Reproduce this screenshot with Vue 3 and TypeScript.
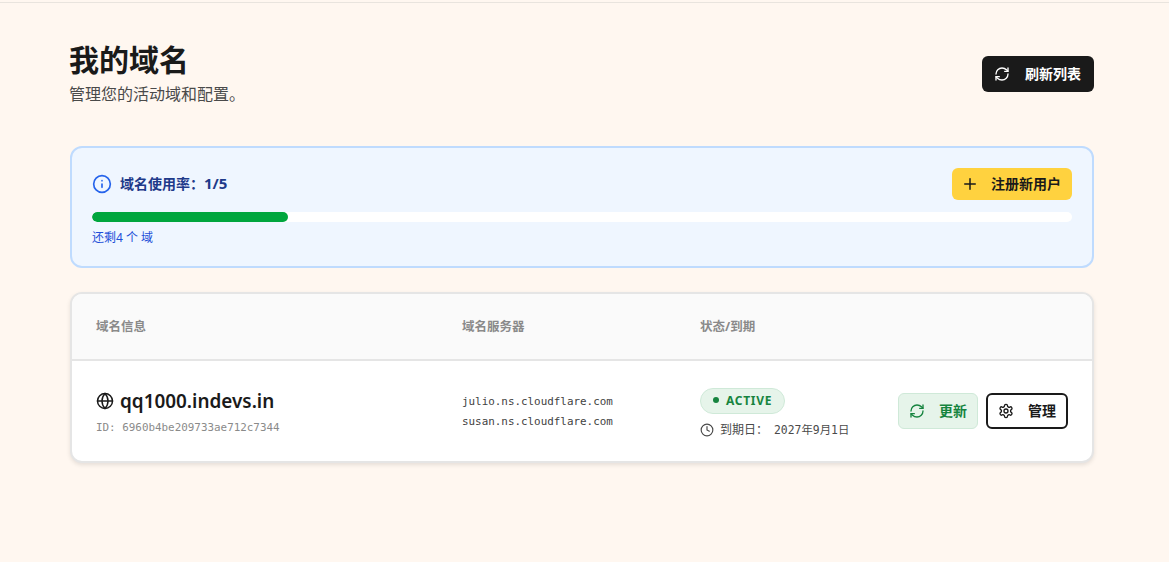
<script setup lang="ts">
const refreshPaths = [
  'M3 12a9 9 0 0 1 9-9 9.75 9.75 0 0 1 6.74 2.74L21 8',
  'M21 3v5h-5',
  'M21 12a9 9 0 0 1-9 9 9.75 9.75 0 0 1-6.74-2.74L3 16',
  'M8 16H3v5',
]
const nameservers: string[] = ['julio.ns.cloudflare.com', 'susan.ns.cloudflare.com']
const usedPercent = 20
</script>

<template>
  <div class="page">
    <div class="rule"></div>
    <main class="wrap">
      <header class="head">
        <div>
          <h1 class="title">我的域名</h1>
          <p class="sub">管理您的活动域和配置。</p>
        </div>
        <button class="btn btn-dark">
          <svg class="ico" viewBox="0 0 24 24"><path v-for="d in refreshPaths" :key="d" :d="d" /></svg>
          <span>刷新列表</span>
        </button>
      </header>

      <section class="usage">
        <div class="usage-top">
          <div class="usage-label">
            <svg class="ico info" viewBox="0 0 24 24"><circle cx="12" cy="12" r="10" /><path d="M12 16v-4" /><path d="M12 8h.01" /></svg>
            <span class="usage-text">域名使用率：<span class="frac">1/5</span></span>
          </div>
          <button class="btn btn-yellow">
            <svg class="ico plus" viewBox="0 0 24 24"><path d="M5 12h14" /><path d="M12 5v14" /></svg>
            <span>注册新用户</span>
          </button>
        </div>
        <div class="track"><div class="fill" :style="{ width: usedPercent + '%' }"></div></div>
        <p class="left">还剩4 个 域</p>
      </section>

      <section class="table">
        <div class="row thead">
          <div>域名信息</div>
          <div>域名服务器</div>
          <div>状态/到期</div>
        </div>
        <div class="row tbody">
          <div class="info-cell">
            <div class="domain">
              <svg class="ico globe" viewBox="0 0 24 24"><circle cx="12" cy="12" r="10" /><path d="M12 2a14.5 14.5 0 0 0 0 20 14.5 14.5 0 0 0 0-20" /><path d="M2 12h20" /></svg>
              <span>qq1000.indevs.in</span>
            </div>
            <div class="id">ID: 6960b4be209733ae712c7344</div>
          </div>
          <div class="ns">
            <div v-for="n in nameservers" :key="n">{{ n }}</div>
          </div>
          <div class="status">
            <span class="badge"><i class="dot"></i>ACTIVE</span>
            <div class="expiry">
              <svg class="ico clock" viewBox="0 0 24 24"><circle cx="12" cy="12" r="10" /><path d="M12 6v6l4 2" /></svg>
              <span class="exp-label">到期日：</span>
              <span class="exp-date">2027年9月1日</span>
            </div>
          </div>
          <div class="actions">
            <button class="btn btn-green">
              <svg class="ico" viewBox="0 0 24 24"><path v-for="d in refreshPaths" :key="d" :d="d" /></svg>
              <span>更新</span>
            </button>
            <button class="btn btn-outline">
              <svg class="ico" viewBox="0 0 24 24"><path d="M12.22 2h-.44a2 2 0 0 0-2 2v.18a2 2 0 0 1-1 1.73l-.43.25a2 2 0 0 1-2 0l-.15-.08a2 2 0 0 0-2.73.73l-.22.38a2 2 0 0 0 .73 2.73l.15.1a2 2 0 0 1 1 1.72v.51a2 2 0 0 1-1 1.74l-.15.09a2 2 0 0 0-.73 2.73l.22.38a2 2 0 0 0 2.73.73l.15-.08a2 2 0 0 1 2 0l.43.25a2 2 0 0 1 1 1.73V20a2 2 0 0 0 2 2h.44a2 2 0 0 0 2-2v-.18a2 2 0 0 1 1-1.73l.43-.25a2 2 0 0 1 2 0l.15.08a2 2 0 0 0 2.73-.73l.22-.39a2 2 0 0 0-.73-2.73l-.15-.08a2 2 0 0 1-1-1.74v-.5a2 2 0 0 1 1-1.74l.15-.09a2 2 0 0 0 .73-2.73l-.22-.38a2 2 0 0 0-2.73-.73l-.15.08a2 2 0 0 1-2 0l-.43-.25a2 2 0 0 1-1-1.73V4a2 2 0 0 0-2-2z" /><circle cx="12" cy="12" r="3" /></svg>
              <span>管理</span>
            </button>
          </div>
        </div>
      </section>
    </main>
  </div>
</template>

<style>
html, body { margin: 0; background: #fff7f0; }
</style>

<style scoped>
.page {
  min-height: 562px;
  box-sizing: border-box;
  background: #fff7f0;
  padding-top: 2px;
  font-family: "Noto Sans", "Noto Sans CJK SC", sans-serif;
  color: #1a1a1a;
}
.rule { height: 1px; background: #e9e4de; }
.wrap { width: 1024px; margin-left: 70px; padding-top: 39px; }
.head { display: flex; justify-content: space-between; align-items: center; margin-bottom: 40px; }
.title { margin: 0 0 4px -1px; font-size: 30px; line-height: 36px; font-weight: 700; }
.sub { margin: 0 0 0 -1px; font-size: 16px; line-height: 24px; color: #4a4a4a; }
.btn {
  display: inline-flex;
  align-items: center;
  box-sizing: border-box;
  border: 0;
  border-radius: 6px;
  font-family: inherit;
  font-size: 14px;
  font-weight: 700;
  padding: 0;
}
.btn span { margin-top: -2px; }
.ico { width: 16px; height: 16px; fill: none; stroke: currentColor; stroke-width: 2; stroke-linecap: round; stroke-linejoin: round; flex: none; }
.btn-dark { background: #1a1a1a; color: #fff; height: 36px; width: 112px; padding-left: 12px; gap: 15px; }
.btn-yellow { background: #ffd23f; color: #1a1a1a; height: 32px; width: 120px; padding-left: 9px; gap: 12px; }
.plus { width: 18px; height: 18px; }
.usage {
  box-sizing: border-box;
  height: 122px;
  background: #eff6ff;
  border: 2px solid #bfdbfe;
  border-radius: 12px;
  padding: 20px;
}
.usage-top { display: flex; justify-content: space-between; align-items: center; margin-bottom: 12px; }
.usage-label { display: flex; align-items: center; gap: 8px; font-size: 14px; font-weight: 700; color: #1e3a8a; }
.usage-text { margin-top: -2px; }
.frac { font-size: 15px; }
.info { width: 20px; height: 20px; color: #2563eb; }
.track { height: 10px; background: #fff; border-radius: 5px; overflow: hidden; }
.fill { height: 100%; background: #00a63e; border-radius: 5px; }
.left { margin: 8px 0 0; font-size: 12px; line-height: 16px; color: #1d4ed8; }
.table {
  margin-top: 24px;
  border: 2px solid #e5e5e5;
  border-radius: 12px;
  overflow: hidden;
  background: #fff;
  box-shadow: 0 2px 4px rgba(0, 0, 0, 0.1);
}
.row { display: grid; grid-template-columns: 366px 238px 198px 1fr; align-items: center; }
.row > div { box-sizing: border-box; padding-left: 24px; }
.thead { height: 63px; padding-bottom: 2px; background: #fafafa; border-bottom: 2px solid #e5e5e5; font-size: 12.5px; font-weight: 700; color: #8a8a8a; }
.tbody { height: 100px; }
.info-cell, .ns { padding-top: 2px; }
.domain { display: flex; align-items: center; gap: 6px; font-size: 18.9px; line-height: 26px; font-weight: 600; color: #1a1a1a; }
.globe { width: 18px; height: 18px; }
.id { margin-top: 6px; font-family: "DejaVu Sans Mono", monospace; font-size: 10.9px; line-height: 16px; color: #8a8a8a; }
.ns { font-family: "DejaVu Sans Mono", monospace; font-size: 10.9px; line-height: 20px; color: #3f3f3f; }
.badge {
  display: inline-flex;
  align-items: center;
  gap: 7px;
  box-sizing: border-box;
  height: 26px;
  padding: 0 12px 2px;
  background: #e6f4ea;
  border: 1px solid #cfe9d8;
  border-radius: 13px;
  font-size: 12px;
  font-weight: 700;
  letter-spacing: 0.7px;
  color: #16843f;
}
.dot { width: 6px; height: 6px; border-radius: 50%; background: #16843f; }
.expiry { display: flex; align-items: center; margin-top: 8px; margin-bottom: -2px; font-size: 12px; line-height: 16px; color: #4a4a4a; }
.clock { width: 14px; height: 14px; margin-right: 6px; }
.exp-label { margin-right: 6px; }
.exp-date { font-family: "DejaVu Sans Mono", "Noto Sans CJK SC", monospace; font-size: 11.4px; }
.actions { display: flex; justify-content: flex-end; gap: 8px; padding-right: 24px; padding-left: 0 !important; }
.btn-green { background: #e6f4ea; border: 1px solid #cfe9d8; color: #16843f; height: 36px; width: 80px; padding-left: 10px; gap: 14px; }
.btn-outline { background: #fff; border: 2px solid #1a1a1a; color: #1a1a1a; height: 36px; width: 82px; padding-left: 10px; gap: 14px; }
</style>
